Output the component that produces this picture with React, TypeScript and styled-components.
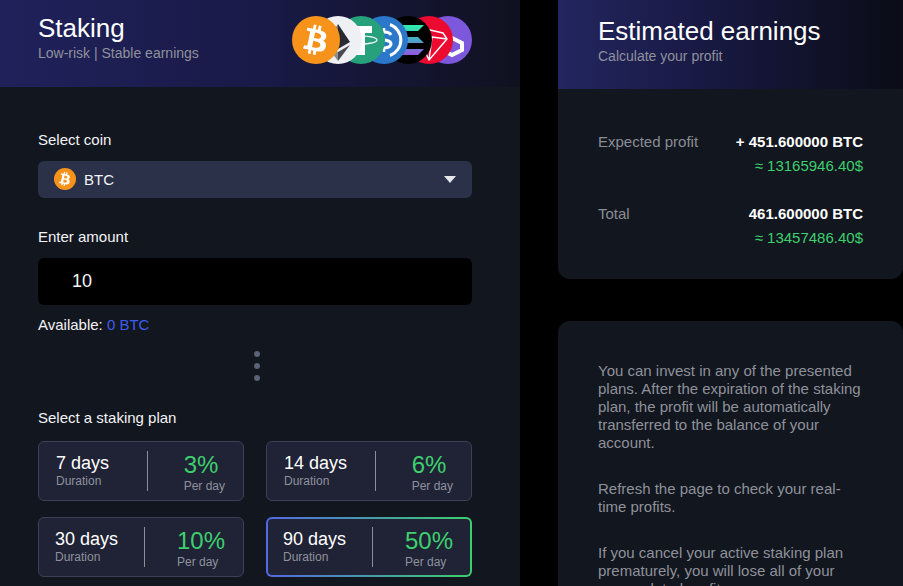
import React from 'react';
import styled, { createGlobalStyle } from 'styled-components';
import { FaBtc } from 'react-icons/fa';

const GlobalStyle = createGlobalStyle`
  html, body {
    margin: 0;
    height: 100%;
    background: #000;
    overflow: hidden;
    font-family: "Liberation Sans", Arial, sans-serif;
  }
`;

const Page = styled.div`
  display: grid;
  grid-template-columns: 520px 345px;
  column-gap: 38px;
  height: 586px;
  overflow: hidden;
  align-items: start;
`;

const Panel = styled.section`
  background: #12161f;
  border-radius: 0 0 12px 12px;
  overflow: hidden;
`;

const Header = styled.header<{ $tall?: boolean }>`
  display: flex;
  align-items: center;
  justify-content: space-between;
  height: ${(p) => (p.$tall ? '89px' : '87px')};
  box-sizing: border-box;
  padding: ${(p) => (p.$tall ? '0 40px 10px' : '0 48px 14px 38px')};
  background: ${(p) =>
    p.$tall
      ? 'linear-gradient(90deg, #23265f 0%, #1a1b48 35%, #0b0c16 100%)'
      : 'linear-gradient(90deg, #20215a 0%, #191a47 50%, #10111f 100%)'};
`;

const Title = styled.h1`
  margin: 0 0 2px;
  font-size: 26px;
  line-height: 30px;
  font-weight: 400;
  color: #fff;
`;

const Subtitle = styled.p`
  margin: 0;
  font-size: 14px;
  line-height: 16px;
  color: #8f919c;
`;

const CoinStack = styled.div`
  display: flex;
  margin-top: 7px;
`;

const CoinWrap = styled.div<{ $order: number; $overlap?: number }>`
  width: 48px;
  height: 48px;
  flex: none;
  position: relative;
  z-index: ${(p) => p.$order};
  margin-left: ${(p) => -(p.$overlap ?? 0)}px;
`;

const CoinRound = styled.div<{ $size: number }>`
  width: ${(p) => p.$size}px;
  height: ${(p) => p.$size}px;
  border-radius: 50%;
  background: #f7931a;
  color: #fff;
  display: flex;
  align-items: center;
  justify-content: center;
  flex: none;
  svg {
    transform: rotate(12deg);
  }
`;

const StakeBody = styled.div`
  padding: 45px 48px 40px 38px;
`;

const FieldLabel = styled.div`
  font-size: 15px;
  line-height: 16px;
  color: #f2f3f5;
`;

const SelectBox = styled.div`
  display: flex;
  align-items: center;
  gap: 8px;
  height: 37px;
  margin: 13px 0 31px;
  padding: 0 16px 1px;
  box-sizing: border-box;
  background: #2a3149;
  border-radius: 6px;
  font-size: 15px;
  color: #f2f3f5;
`;

const Caret = styled.span`
  margin-left: auto;
  width: 0;
  height: 0;
  border-left: 6px solid transparent;
  border-right: 6px solid transparent;
  border-top: 7px solid #e6e7ea;
`;

const AmountInput = styled.input`
  display: block;
  width: 100%;
  box-sizing: border-box;
  height: 47px;
  margin: 13px 0 12px;
  padding: 0 34px;
  background: #000;
  border: 0;
  outline: 0;
  border-radius: 6px;
  font: 18px "Liberation Sans", Arial, sans-serif;
  color: #f5f5f5;
`;

const Available = styled.div`
  font-size: 15px;
  line-height: 16px;
  color: #f2f3f5;
  span {
    color: #3f5cee;
  }
`;

const Dots = styled.div`
  display: flex;
  flex-direction: column;
  align-items: center;
  gap: 6px;
  margin: 18px 0 29px 4px;
  i {
    width: 6px;
    height: 6px;
    border-radius: 50%;
    background: #5b6176;
  }
`;

const PlanGrid = styled.div`
  display: grid;
  grid-template-columns: repeat(2, 206px);
  column-gap: 22px;
  row-gap: 16px;
  margin-top: 15px;
`;

const PlanCard = styled.div<{ $active?: boolean; $wide?: boolean }>`
  display: flex;
  align-items: center;
  height: 60px;
  box-sizing: border-box;
  padding: ${(p) => (p.$active ? '0 17px 0 15px' : p.$wide ? '0 18px 0 16px' : '0 18px 0 17px')};
  border-radius: 6px;
  border: ${(p) => (p.$active ? '2px solid transparent' : '1px solid #3b4158')};
  background: ${(p) =>
    p.$active
      ? 'linear-gradient(#1f2335, #1f2335) padding-box, linear-gradient(90deg, #5468e6, #3ccf6c) border-box'
      : '#1f2335'};
`;

const PlanLeft = styled.div`
  flex: 1;
  margin-top: -1px;
`;

const PlanDays = styled.div`
  font-size: 18px;
  line-height: 21px;
  color: #fff;
`;

const PlanNote = styled.div`
  font-size: 12px;
  line-height: 14px;
  color: #8f919c;
`;

const PlanDivider = styled.div`
  width: 1px;
  height: 40px;
  background: #8b8e9a;
`;

const PlanRight = styled.div<{ $wide?: boolean }>`
  padding-left: ${(p) => (p.$wide ? '32px' : '36px')};
`;

const PlanRate = styled.div`
  font-size: 24px;
  line-height: 29px;
  color: #3ecf6e;
`;

const SideColumn = styled.div`
  display: flex;
  flex-direction: column;
  gap: 42px;
`;

const ResultList = styled.div`
  display: flex;
  flex-direction: column;
  gap: 24px;
  padding: 41px 40px 29px;
`;

const ResultRow = styled.div`
  display: flex;
  justify-content: space-between;
  align-items: flex-start;
`;

const ResultLabel = styled.div`
  font-size: 15px;
  line-height: 24px;
  color: #8a8c95;
`;

const ResultValue = styled.div`
  text-align: right;
`;

const Crypto = styled.div`
  font-size: 15px;
  line-height: 24px;
  font-weight: 700;
  color: #fff;
`;

const Fiat = styled.div`
  font-size: 15px;
  line-height: 24px;
  color: #3ecf6e;
`;

const InfoCard = styled.section`
  background: #12161f;
  border-radius: 12px;
  padding: 41px 40px 0;
  height: 300px;
  box-sizing: border-box;
`;

const InfoText = styled.p`
  margin: 0 0 28px;
  font-size: 15px;
  line-height: 18px;
  color: #8f919a;
`;

const coins = [
  { id: 'eth', overlap: 26, art: (
    <>
      <circle cx="24" cy="24" r="24" fill="#eef0f3" />
      <path d="M24 8 36 26 24 33Z" fill="#2a2b30" />
      <path d="M24 8 12 26 24 33Z" fill="#77787c" />
      <path d="M24 36 36 29 24 45Z" fill="#4a4b50" />
      <path d="M24 36 12 29 24 45Z" fill="#8e8f93" />
    </>
  ) },
  { id: 'usdt', overlap: 25, art: (
    <>
      <circle cx="24" cy="24" r="24" fill="#26a17b" />
      <path d="M10 10H35V17H28V39H18V17H10Z" fill="#fff" />
      <ellipse cx="24" cy="24" rx="16" ry="4" fill="none" stroke="#fff" strokeWidth="1.2" />
    </>
  ) },
  { id: 'usdc', overlap: 25, art: (
    <>
      <circle cx="24" cy="24" r="24" fill="#2b78cb" />
      <path d="M30 8.5A16.5 16.5 0 0 1 30 39.5" fill="none" stroke="#fff" strokeWidth="3" />
      <path d="M18 8.5A16.5 16.5 0 0 0 18 39.5" fill="none" stroke="#fff" strokeWidth="3" />
      <path d="M31 19C29 15 18 15 17.5 20C17.5 26 31 22 31 28C30.5 33 19 33 17 29" fill="none" stroke="#fff" strokeWidth="3" />
      <path d="M24 12V16M24 32V36" stroke="#fff" strokeWidth="2.6" />
    </>
  ) },
  { id: 'sol', overlap: 24, art: (
    <>
      <defs>
        <linearGradient id="solGrad" x1="0" y1="0" x2="0" y2="1">
          <stop offset="0" stopColor="#2ff0a8" />
          <stop offset="0.5" stopColor="#4aa7c9" />
          <stop offset="1" stopColor="#9455e0" />
        </linearGradient>
      </defs>
      <circle cx="24" cy="24" r="24" fill="#000" />
      <path
        d="M14 9H40L34 15H8ZM8 21H34L40 27H14ZM14 33H40L34 39H8Z"
        fill="url(#solGrad)"
      />
    </>
  ) },
  { id: 'trx', overlap: 27, art: (
    <>
      <circle cx="24" cy="24" r="24" fill="#ec0a30" />
      <path
        d="M8 10 38 17 42 23 24 44ZM8 10 24 44 27 21ZM8 10 27 21 42 23"
        fill="none"
        stroke="#fff"
        strokeWidth="1.4"
        strokeLinejoin="round"
      />
    </>
  ) },
  { id: 'matic', overlap: 29, art: (
    <>
      <circle cx="24" cy="24" r="24" fill="#7d57dc" />
      <path
        d="M28 22 38 27V34L28 39 18 34V27Z"
        fill="none"
        stroke="#fff"
        strokeWidth="4"
        strokeLinejoin="miter"
      />
    </>
  ) },
];

const plans = [
  { days: '7 days', rate: '3%' },
  { days: '14 days', rate: '6%' },
  { days: '30 days', rate: '10%', wide: true },
  { days: '90 days', rate: '50%', wide: true, active: true },
];

const BtcCoin = ({ size }: { size: number }) => (
  <CoinRound $size={size}>
    <FaBtc size={Math.round(size * 0.62)} />
  </CoinRound>
);

export default function App() {
  return (
    <>
      <GlobalStyle />
      <Page>
        <Panel>
          <Header>
            <div>
              <Title>Staking</Title>
              <Subtitle>Low-risk | Stable earnings</Subtitle>
            </div>
            <CoinStack>
              <CoinWrap $order={7}>
                <BtcCoin size={48} />
              </CoinWrap>
              {coins.map((c, i) => (
                <CoinWrap key={c.id} $order={6 - i} $overlap={c.overlap}>
                  <svg width="48" height="48" viewBox="0 0 48 48">{c.art}</svg>
                </CoinWrap>
              ))}
            </CoinStack>
          </Header>
          <StakeBody>
            <FieldLabel>Select coin</FieldLabel>
            <SelectBox>
              <BtcCoin size={22} />
              BTC
              <Caret />
            </SelectBox>
            <FieldLabel>Enter amount</FieldLabel>
            <AmountInput defaultValue="10" />
            <Available>
              Available: <span>0 BTC</span>
            </Available>
            <Dots>
              <i />
              <i />
              <i />
            </Dots>
            <FieldLabel>Select a staking plan</FieldLabel>
            <PlanGrid>
              {plans.map((p) => (
                <PlanCard key={p.days} $active={p.active} $wide={p.wide}>
                  <PlanLeft>
                    <PlanDays>{p.days}</PlanDays>
                    <PlanNote>Duration</PlanNote>
                  </PlanLeft>
                  <PlanDivider />
                  <PlanRight $wide={p.wide}>
                    <PlanRate>{p.rate}</PlanRate>
                    <PlanNote>Per day</PlanNote>
                  </PlanRight>
                </PlanCard>
              ))}
            </PlanGrid>
          </StakeBody>
        </Panel>
        <SideColumn>
          <Panel>
            <Header $tall>
              <div>
                <Title>Estimated earnings</Title>
                <Subtitle>Calculate your profit</Subtitle>
              </div>
            </Header>
            <ResultList>
              <ResultRow>
                <ResultLabel>Expected profit</ResultLabel>
                <ResultValue>
                  <Crypto>+ 451.600000 BTC</Crypto>
                  <Fiat>≈ 13165946.40$</Fiat>
                </ResultValue>
              </ResultRow>
              <ResultRow>
                <ResultLabel>Total</ResultLabel>
                <ResultValue>
                  <Crypto>461.600000 BTC</Crypto>
                  <Fiat>≈ 13457486.40$</Fiat>
                </ResultValue>
              </ResultRow>
            </ResultList>
          </Panel>
          <InfoCard>
            <InfoText>
              You can invest in any of the presented plans. After the expiration of the staking
              plan, the profit will be automatically transferred to the balance of your account.
            </InfoText>
            <InfoText>Refresh the page to check your real-time profits.</InfoText>
            <InfoText>
              If you cancel your active staking plan prematurely, you will lose all of your
              accumulated profits.
            </InfoText>
          </InfoCard>
        </SideColumn>
      </Page>
    </>
  );
}
